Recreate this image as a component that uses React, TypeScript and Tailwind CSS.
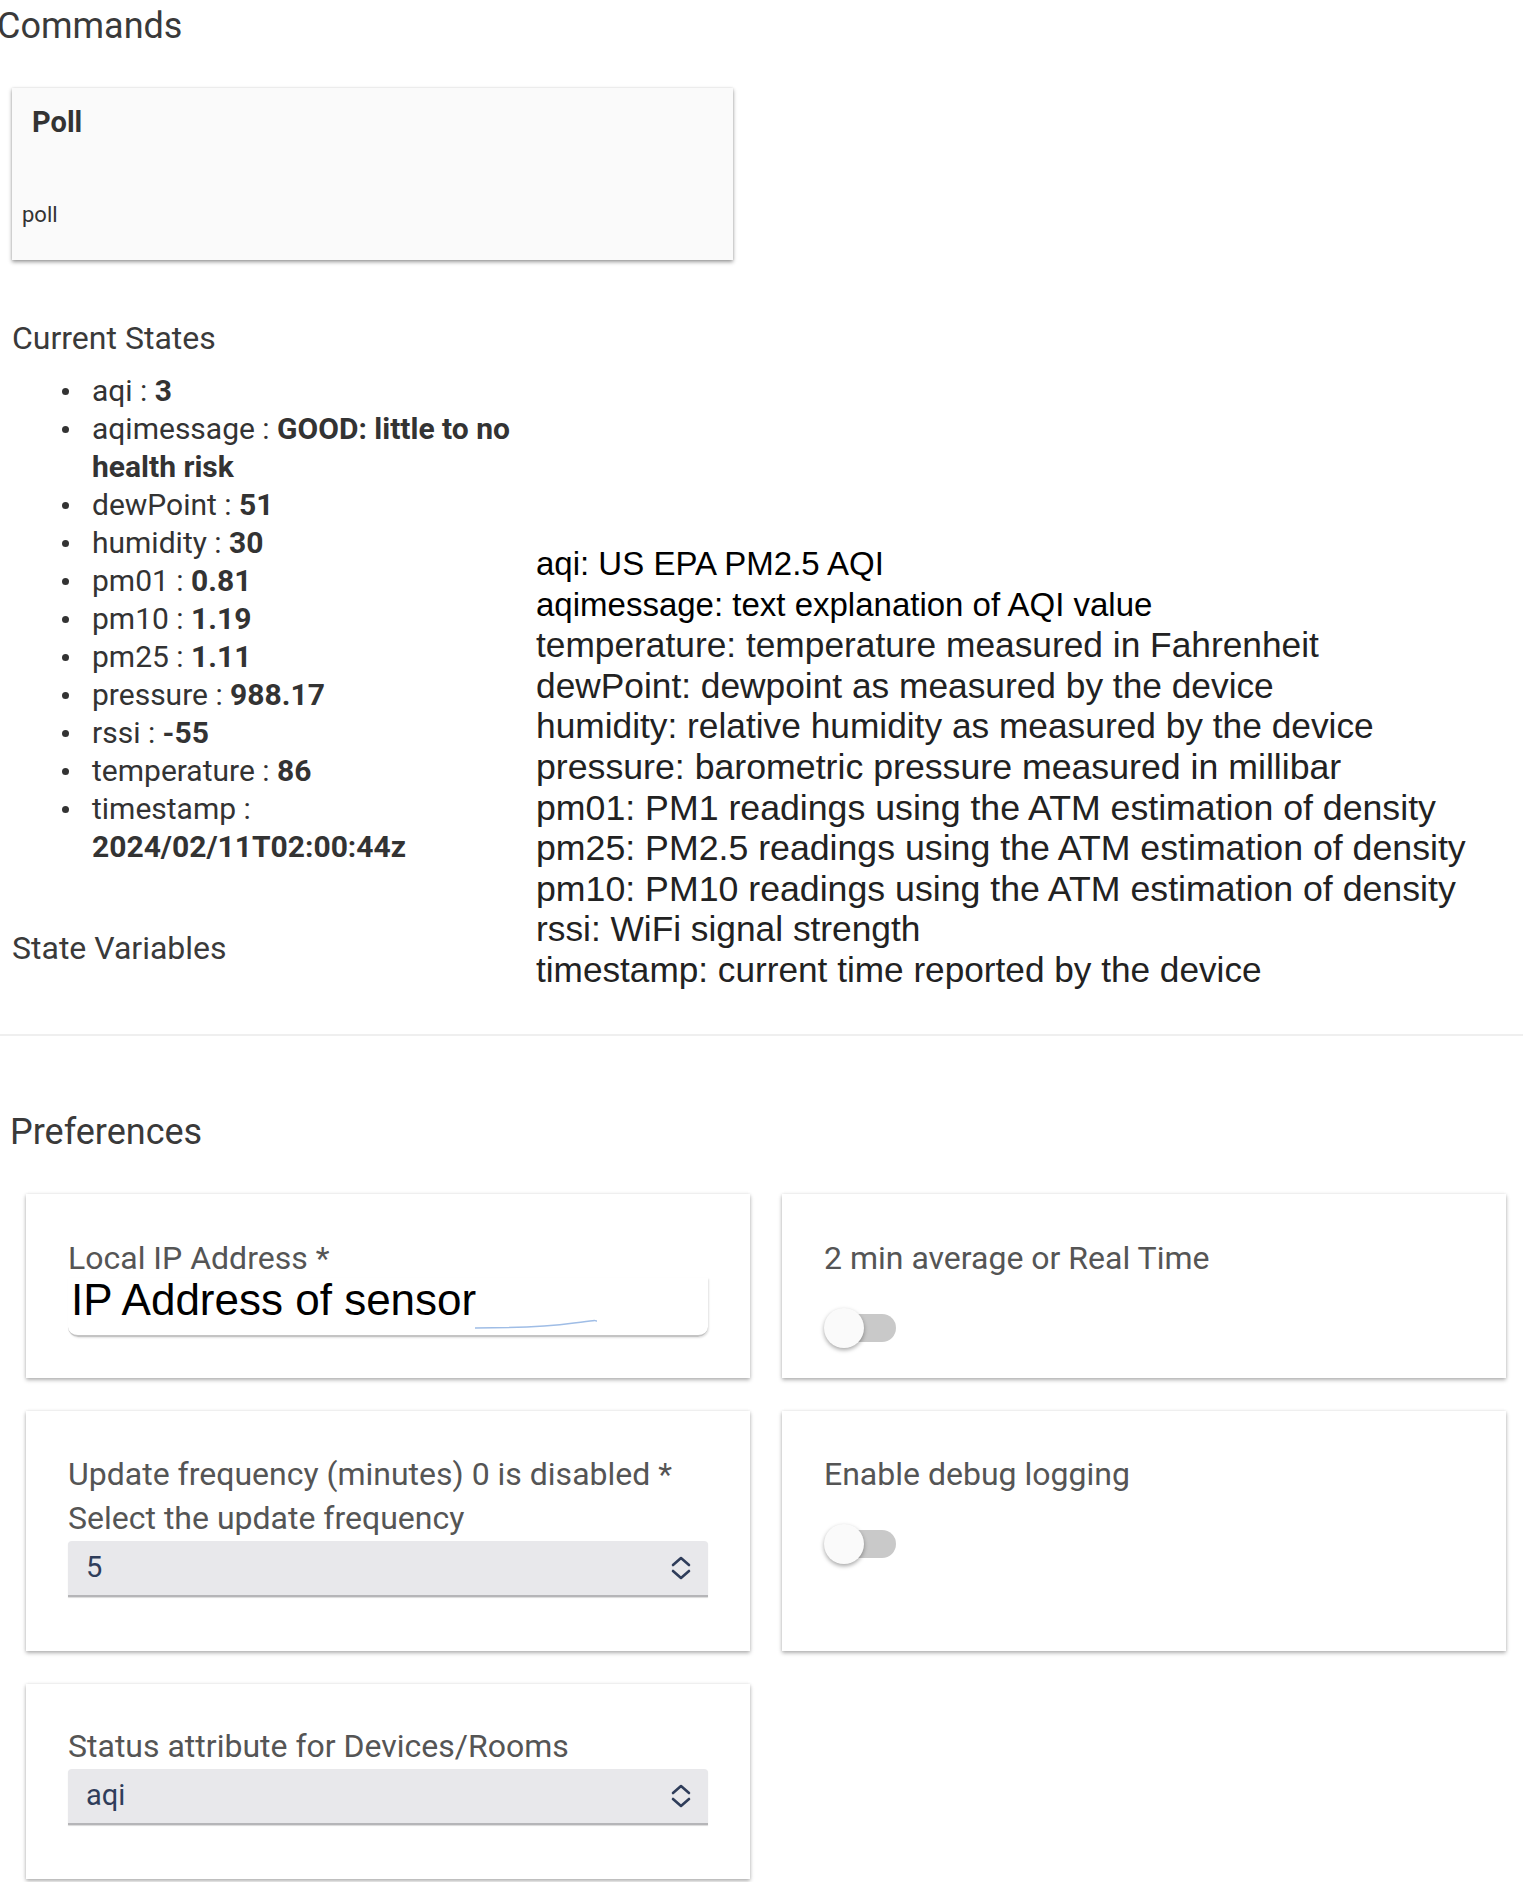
const states: [string, string][] = [
  ['aqi', '3'],
  ['aqimessage', 'GOOD: little to no health risk'],
  ['dewPoint', '51'],
  ['humidity', '30'],
  ['pm01', '0.81'],
  ['pm10', '1.19'],
  ['pm25', '1.11'],
  ['pressure', '988.17'],
  ['rssi', '-55'],
  ['temperature', '86'],
  ['timestamp', '2024/02/11T02:00:44z'],
];

// the first two lines of the pasted notes are a touch smaller and darker
const notes: [string, string][] = [
  ['aqi: US EPA PM2.5 AQI', 'text-[33px] text-black'],
  ['aqimessage: text explanation of AQI value', 'text-[33px] text-black'],
  ['temperature: temperature measured in Fahrenheit', 'text-[35.3px] text-[#222]'],
  ['dewPoint: dewpoint as measured by the device', 'text-[35.3px] text-[#222]'],
  ['humidity: relative humidity as measured by the device', 'text-[35.3px] text-[#222]'],
  ['pressure: barometric pressure measured in millibar', 'text-[35.7px] text-[#222]'],
  ['pm01: PM1 readings using the ATM estimation of density', 'text-[35.7px] text-[#222]'],
  ['pm25: PM2.5 readings using the ATM estimation of density', 'text-[35.7px] text-[#222]'],
  ['pm10: PM10 readings using the ATM estimation of density', 'text-[35.7px] text-[#222]'],
  ['rssi: WiFi signal strength', 'text-[35.3px] text-[#222]'],
  ['timestamp: current time reported by the device', 'text-[35.2px] text-[#222]'],
];

function Toggle() {
  return (
    <div className="relative mt-[30px] w-[72px] h-[40px]">
      <div className="absolute left-[4px] top-[6px] w-[68px] h-[28px] rounded-full bg-[#c9c9c9]" />
      <div className="absolute left-0 top-0 w-[40px] h-[40px] rounded-full bg-[#fafafa] shadow-[0_2px_4px_rgba(0,0,0,0.35)]" />
    </div>
  );
}

function Chevrons() {
  return (
    <svg className="w-[22px] h-[26px] text-[#2f3d5a]" viewBox="0 0 22 26" fill="none" stroke="currentColor" strokeWidth={2.6} strokeLinecap="round" strokeLinejoin="round">
      <path d="M3 10l8-7 8 7" />
      <path d="M3 16l8 7 8-7" />
    </svg>
  );
}

function Select({ value }: { value: string }) {
  return (
    <div className="mt-[3px] h-[56px] flex items-center justify-between pl-[18px] pr-[16px] bg-[#e8e8eb] rounded-t-[4px] border-b-2 border-[#b5b5b8] shadow-[0_1px_1px_rgba(0,0,0,0.15)]">
      <span className="text-[29px] text-[#2f3d5a]">{value}</span>
      <Chevrons />
    </div>
  );
}

const card = 'bg-white px-[42px] shadow-[0_2px_4px_rgba(0,0,0,0.3),0_0_3px_rgba(0,0,0,0.08)]';

export default function App() {
  return (
    <div className="min-h-screen bg-white text-[#3a3a3a] font-['Roboto',sans-serif] overflow-hidden">
      {/* Top section */}
      <div className="pb-[43px] border-b-2 border-[#efefef]">
        <h1 className="ml-[-3px] text-[36px] leading-[52px] text-[#3a3a3a]">Commands</h1>

        <div className="ml-[12px] mt-[36px] w-[721px] h-[172px] bg-[#fafafa] shadow-[0_2px_4px_rgba(0,0,0,0.4),0_0_2px_rgba(0,0,0,0.1)]">
          <div className="pl-[20px] pt-[16px] text-[29px] font-bold leading-[36px] text-[#333]">Poll</div>
          <div className="pl-[10px] mt-[60px] text-[22px] leading-[30px] text-[#333]">poll</div>
        </div>

        <div className="flex mt-[58px]">
          <div className="w-[536px] shrink-0">
            <h2 className="ml-[12px] text-[32px] leading-[40px] text-[#3a3a3a]">Current States</h2>
            <ul className="mt-[14px] ml-[62px] w-[470px] text-[30px] leading-[38px] text-[#333]">
              {states.map(([k, v]) => (
                <li key={k} className="flex">
                  <span className="w-[30px] h-[38px] shrink-0 flex items-center">
                    <span className="w-[7px] h-[7px] rounded-full bg-[#333]" />
                  </span>
                  <span>
                    {k} : <b className="font-bold">{v}</b>
                  </span>
                </li>
              ))}
            </ul>
            <h2 className="ml-[12px] mt-[62px] text-[32px] leading-[40px] text-[#3a3a3a]">State Variables</h2>
          </div>
          <div className="pt-[226px] font-['Liberation_Sans',Arial,sans-serif] leading-[40.6px] whitespace-nowrap">
            {notes.map(([n, cls]) => (
              <div key={n} className={cls}>{n}</div>
            ))}
          </div>
        </div>
      </div>

      {/* Preferences */}
      <h2 className="ml-[10px] mt-[74px] text-[36px] leading-[44px] text-[#3a3a3a]">Preferences</h2>

      <div className="ml-[26px] mt-[40px] w-[1480px] grid grid-cols-2 gap-x-[32px] gap-y-[33px]">
        <div className={`${card} h-[184px] pt-[44px]`}>
          <div className="text-[32px] leading-[40px] text-[#555]">Local IP Address *</div>
          <div className="relative h-[59px] pl-[3px] border-b-2 border-[#c4c4c4] rounded-b-[10px] shadow-[1px_1px_2px_rgba(0,0,0,0.12)]">
            <span className="font-['Liberation_Sans',Arial,sans-serif] text-[44px] leading-[44px] text-black">IP Address of sensor</span>
            <svg className="absolute left-[406px] top-[40px] w-[124px] h-[14px]" viewBox="0 0 124 14" fill="none">
              <path d="M1 10 C 30 10, 70 9, 100 5 S 118 3, 123 3" stroke="#9fbde6" strokeWidth={1.5} />
            </svg>
          </div>
        </div>

        <div className={`${card} h-[184px] pt-[44px]`}>
          <div className="text-[32px] leading-[40px] text-[#555]">2 min average or Real Time</div>
          <Toggle />
        </div>

        <div className={`${card} h-[240px] pt-[43px]`}>
          <div className="text-[32px] leading-[40px] text-[#555]">Update frequency (minutes) 0 is disabled *</div>
          <div className="mt-[4px] text-[32px] leading-[40px] text-[#555]">Select the update frequency</div>
          <Select value="5" />
        </div>

        <div className={`${card} h-[240px] pt-[43px]`}>
          <div className="text-[32px] leading-[40px] text-[#555]">Enable debug logging</div>
          <Toggle />
        </div>

        <div className={`${card} h-[195px] pt-[42px]`}>
          <div className="text-[32px] leading-[40px] text-[#555]">Status attribute for Devices/Rooms</div>
          <Select value="aqi" />
        </div>
      </div>
    </div>
  );
}
